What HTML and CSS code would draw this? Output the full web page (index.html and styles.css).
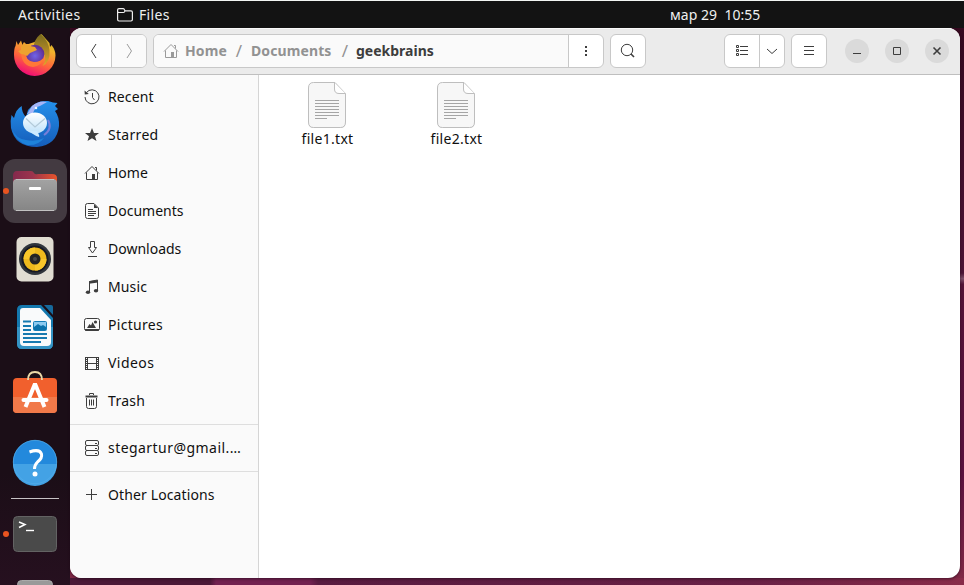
FILE: index.html
```html
<!DOCTYPE html>
<html lang="en">
<head>
<meta charset="utf-8">
<title>Files</title>
<link rel="stylesheet" href="styles.css">
</head>
<body>
<header class="topbar">
  <span class="activities">Activities</span>
  <span class="app"><svg width="16" height="14" viewBox="0 0 16 14" fill="none" stroke="#eee" stroke-width="1.2"><path d="M.6 3.500V2Q.6.6 2 .6h4.200q1 0 1.300 1.200.3 1 1.300 1H14q1.400 0 1.400 1.400v7.400q0 1.400-1.400 1.400H2Q.6 13 .6 11.600V3.500q0 1 1.400 1h4.500q1 0 1.500-1.700"/></svg><span class="applabel">Files</span></span>
  <span class="clock">мар 29&nbsp; 10:55</span>
</header>
<div class="desktop">
  <nav class="dock">
    <div class="launcher"><svg width="64" height="64" viewBox="0 0 64 64">
      <defs>
        <linearGradient id="fox" x1=".75" y1="0" x2=".35" y2="1"><stop offset="0" stop-color="#b7a724"/><stop offset=".3" stop-color="#f3b52c"/><stop offset=".65" stop-color="#ff643c"/><stop offset="1" stop-color="#ef0878"/></linearGradient>
        <linearGradient id="flame" x1="0" y1="0" x2="0" y2="1"><stop offset="0" stop-color="#77691f"/><stop offset="1" stop-color="#e2a52c"/></linearGradient>
        <radialGradient id="orb" cx=".5" cy=".6"><stop offset="0" stop-color="#7064e8"/><stop offset="1" stop-color="#603096"/></radialGradient>
        <linearGradient id="bird" x1="0" y1="0" x2="0" y2="1"><stop offset="0" stop-color="#2490ea"/><stop offset="1" stop-color="#155dba"/></linearGradient>
        <linearGradient id="mail" x1="0" y1="0" x2="0" y2="1"><stop offset="0" stop-color="#fff"/><stop offset="1" stop-color="#bfe2fa"/></linearGradient>
        <linearGradient id="steel" x1="0" y1="0" x2="0" y2="1"><stop offset="0" stop-color="#a3a3a3"/><stop offset="1" stop-color="#858585"/></linearGradient>
        <linearGradient id="flap"><stop offset="0" stop-color="#84294d"/><stop offset=".45" stop-color="#9c344d"/><stop offset="1" stop-color="#e8542b"/></linearGradient>
      </defs>
      <path d="M13.500 18l1.500 4 3-4.500 1.500 4.500q3-1.500 6-1l6-2 4-4 3-4 4 4.500 4 4.500.5 4 1.500-2q4 5 4 10.500A20.700 20.700 0 0 1 11 32q0-7 1.500-9z" fill="url(#fox)"/>
      <path d="M37.500 11q-6 5-7 13 8 2 11 8 2 6-2 11 8-4 7-16-1-9-9-16z" fill="url(#flame)"/>
      <circle cx="32" cy="31" r="9.300" fill="url(#orb)"/>
      <path d="M23 29q-1 9 8 10 7 0 10-5-2 9-11 10-11-1-12-14z" fill="#ff7837"/>
      <path d="M18 24l3-5q3 4 11 5l2 3-7 3-3 3q-3-2-6-2l-3-3 3-1z" fill="#eda22f"/>
    </svg></div>
    <div class="launcher"><svg width="64" height="64" viewBox="0 0 64 64">
      <path d="M8.500 24l2.500 3q2-9 7.700-12 0 7 4.300 11l2-7q8-10 20-9l5 1.500 4.500.5-2.500 3 3 3-3 2q4.500 6 4 15-2 19-22 21Q12 56 8 37q-1-7 .5-13z" fill="url(#bird)"/>
      <path d="M24 23l5-8q7-6 15-4l-7 4q-5 1-7 7z" fill="#a5b5f7"/>
      <path d="M9 38q4 10 14 11 10 2 18-2-6 8-17 7Q12 50 9 38z" fill="#1e82da"/>
      <path d="M45 29q5 9-4 15" fill="none" stroke="#777fd8" stroke-width="2"/>
      <ellipse cx="32" cy="32" rx="12" ry="10.500" fill="url(#mail)"/>
      <path d="M27 40q3 4 9 6 1-1-2-6z" fill="#cdeaff"/>
      <path d="M23 27.500l9 8.500 10-8.500" fill="none" stroke="#b3cad9" stroke-width="1.200"/><circle cx="33" cy="17" r="1.300" fill="#eaf7ff"/>
    </svg></div>
    <div class="launcher active running"><svg width="64" height="64" viewBox="0 0 64 64">
      <path d="M10 17q0-5 4-5h14q2 0 3 2t4 1h14q5 0 5 4v12H10z" fill="url(#flap)"/>
      <rect x="10" y="20" width="44" height="32" rx="4" fill="url(#steel)"/><path d="M13 20.500h38M13 51.500h38" stroke="#c2c2c2"/>
      <rect x="26" y="28" width="12" height="3" rx="1" fill="#fff"/>
    </svg></div>
    <div class="launcher"><svg width="64" height="64" viewBox="0 0 64 64">
      <rect x="13.500" y="10" width="37" height="44.500" rx="5" fill="#e1ddd2"/>
      <circle cx="32" cy="32" r="16" fill="#30353b"/><circle cx="32" cy="32" r="13.500" fill="#171923"/><circle cx="32" cy="32" r="11.500" fill="#eeb91d"/><path d="M20.500 32a11.500 11.500 0 0 1 11.500-11.500L32 32zM32 43.500A11.500 11.500 0 0 0 43.500 32H32z" fill="#f8c62a"/>
      <circle cx="32" cy="32" r="5.500" fill="#242424"/><circle cx="32" cy="32" r="2" fill="#484848"/>
    </svg></div>
    <div class="launcher"><svg width="64" height="64" viewBox="0 0 64 64">
      <path d="M19 10h19l12 13v26q0 5-5 5H19q-5 0-5-5V15q0-5 5-5z" fill="#1478ae"/><path d="M14 32h36v17q0 5-5 5H19q-5 0-5-5z" fill="#3493c4"/>
      <path d="M20 13h17l11 12v22q0 4-4 4H21q-4 0-4-4V16q0-3 3-3z" fill="#f9fafb"/>
      <path d="M41 10h7q2 0 2 2v8z" fill="#16699c"/>
      <path d="M20 26.500h8M20 31h8M20 35h8M20 39h24M20 43h24M20 47h18" stroke="#187ab0" stroke-width="2"/>
      <rect x="30.500" y="26.500" width="13" height="9" rx="1" fill="#8ccaf0" stroke="#147db6"/><path d="M31 35v-3l4-3 3 2 2-1 3 2v3z" fill="#0b72ab"/>
    </svg></div>
    <div class="launcher raised"><svg width="64" height="64" viewBox="0 0 64 64">
      <path d="M10 22q0-4 4-4h36q4 0 4 4v27q0 4-4 4H14q-4 0-4-4z" fill="#f1602d"/><path d="M10 37h44v12q0 4-4 4H14q-4 0-4-4z" fill="#f17949"/>
      <path d="M25 20q0-8 7-8t7 8" fill="none" stroke="#ecd9a8" stroke-width="1.800"/>
      <path d="M22.500 47l9-22h1l9 22" fill="none" stroke="#fff" stroke-width="4"/><path d="M20.500 40h23" stroke="#fff" stroke-width="4" stroke-linecap="round"/>
    </svg></div>
    <div class="launcher help"><svg width="64" height="64" viewBox="0 0 64 64">
      <circle cx="32" cy="32" r="22" fill="#2389dc"/><path d="M10 34h44a22 22 0 0 1-44 0z" fill="#43a2e5"/><circle cx="32" cy="32" r="21.700" fill="none" stroke="#55aee9" stroke-width=".7"/>
      <path d="M26.500 22q10-3.500 12 2 1 4-4 8-3 3-3 7" fill="none" stroke="#fff" stroke-width="3"/><circle cx="32" cy="44" r="2.500" fill="#fff"/>
    </svg></div>
    <hr class="dockline">
    <div class="launcher running"><svg width="64" height="64" viewBox="0 0 64 64">
      <rect x="10.500" y="14.500" width="43" height="35" rx="4" fill="#4a4a4a" stroke="#636363"/>
      <path d="M16 20l6 2.500-6 3" fill="none" stroke="#fff" stroke-width="1.500"/><path d="M23 28.500h8" stroke="#fff" stroke-width="1.400"/>
    </svg></div>
    <div class="launcher partial"><svg width="64" height="15" viewBox="0 0 64 15"><rect x="14.500" y="10.500" width="35" height="44" rx="4" fill="#999" stroke="#aaa"/></svg></div>
  </nav>

  <main class="window">
    <div class="header">
      <div class="group nav">
        <div class="cell"><svg width="16" height="16" viewBox="0 0 16 16"><path d="M10 1L5.500 8l4.500 7" class="line"/></svg></div>
        <div class="cell pale"><svg width="16" height="16" viewBox="0 0 16 16"><path d="M6 1l4.500 7L6 15" class="line faint"/></svg></div>
      </div>
      <div class="group path">
        <div class="crumbs">
          <svg class="faint" width="16" height="16" viewBox="0 0 16 16"><use href="#home"/></svg>
          <span class="crumb c-home">Home</span><span class="slash">/</span><span class="crumb c-docs">Documents</span><span class="slash">/</span><span class="crumb current">geekbrains</span>
        </div>
        <div class="cell"><svg width="16" height="16" viewBox="0 0 16 16" fill="#3d3d3d"><path d="M7 3h2v2H7zm0 4h2v2H7zm0 4h2v2H7z"/></svg></div>
      </div>
      <div class="group single"><div class="cell"><svg width="16" height="16" viewBox="0 0 16 16"><circle cx="7" cy="7" r="5.700" class="line"/><path d="M11 11l3 3" class="line thick"/></svg></div></div>
      <div class="spacer"></div>
      <div class="group view">
        <div class="cell"><svg width="16" height="16" viewBox="0 0 16 16"><path d="M2.500 2.500h2v2h-2zm0 4h2v2h-2zm0 4h2v2h-2zM6 3.500h8M6 7.500h8M6 11.500h8" class="line"/></svg></div>
        <div class="cell slim"><svg width="16" height="16" viewBox="0 0 16 16"><path d="M3 6l5 4.500L13 6" class="line"/></svg></div>
      </div>
      <div class="group single"><div class="cell"><svg width="16" height="16" viewBox="0 0 16 16"><path d="M3 3.500h10M3 7.500h10M3 11.500h10" class="line"/></svg></div></div>
      <div class="controls">
        <div class="control"><svg width="16" height="16" viewBox="0 0 16 16"><path d="M4 10.500h8" class="line"/></svg></div>
        <div class="control"><svg width="16" height="16" viewBox="0 0 16 16"><path d="M4.500 4.500h7v7h-7z" class="line"/></svg></div>
        <div class="control"><svg width="16" height="16" viewBox="0 0 16 16"><path d="M4.500 4.500l7 7m0-7l-7 7" class="line thick"/></svg></div>
      </div>
    </div>
    <div class="body">
      <aside class="sidebar">
        <div class="place"><svg width="16" height="16" viewBox="0 0 16 16"><path d="M2.500 3.500A7 7 0 1 1 1 8M8.500 4v4.500l2 2.500" class="line"/><path d="M.5 1.500l.3 4 4-.4z" fill="#3d3d3d"/></svg><span class="loose">Recent</span></div>
        <div class="place"><svg width="16" height="16" viewBox="0 0 16 16"><path d="M8 1l2 5h5l-4 3.300 1.500 4.700L8 11.200 3.500 14 5 9.300 1 6h5z" fill="#3d3d3d"/></svg><span class="looser">Starred</span></div>
        <div class="place"><svg width="16" height="16" viewBox="0 0 16 16"><g id="home"><path d="M1 8.500l7-7 7 7M2.500 7.500v7h11v-7M11 2.500h1.500v3" class="line"/><path d="M8 9h3v5.500H8z" class="solid"/></g></svg><span>Home</span></div>
        <div class="place"><svg width="16" height="16" viewBox="0 0 16 16"><path d="M3.500.5H10L14.500 5v8.500q0 2-2 2h-9q-2 0-2-2v-11q0-2 2-2zM4 6.500h5M4 8.500h8M4 10.500h8M4 12.500h6" class="line"/><path d="M10 1v4h4z" class="solid"/></svg><span>Documents</span></div>
        <div class="place"><svg width="16" height="16" viewBox="0 0 16 16"><path d="M6.500.5h4v6h2l-4 5.500-4-5.500h2zM4 15.500h9" class="line"/></svg><span>Downloads</span></div>
        <div class="place"><svg width="16" height="16" viewBox="0 0 16 16"><path d="M5.500 13V2.500L13.500 1v10.500" class="line"/><path d="M5 2.200L14 1v2.500L5 4.700z" class="solid"/><ellipse cx="4" cy="13.200" rx="2.200" ry="1.700" class="solid"/><ellipse cx="12" cy="11.700" rx="2.200" ry="1.700" class="solid"/></svg><span class="loose">Music</span></div>
        <div class="place"><svg width="16" height="16" viewBox="0 0 16 16"><rect x=".5" y="1.500" width="15" height="12" rx="2" class="line"/><path d="M1 12h14v1.500l-1.500.5h-11L1 13.500zM3 11l2.500-4 1.500 1.500L8.500 5l3.500 6z" class="solid"/><circle cx="11.500" cy="5" r="1.600" class="solid"/></svg><span class="looser">Pictures</span></div>
        <div class="place"><svg width="16" height="16" viewBox="0 0 16 16"><path d="M3.500 2v13M12.500 2v13M3.500 2.500h9M3.500 8.500h9M3.500 14.500h9" class="line"/><path d="M1.500 2v13M14.500 2v13" class="line"/><path d="M2.500 2v13M13.500 2v13" class="line dotted"/></svg><span class="loosest">Videos</span></div>
        <div class="place"><svg width="16" height="16" viewBox="0 0 16 16"><path d="M2.500 5v8.500q0 2 2 2h6q2 0 2-2V5M5.500 6.500v6M7.500 6.500v6M9.500 6.500v6M5.500 2V.5h4V2" class="line"/><path d="M1.500 3.500h12" class="line heavy"/></svg><span class="looser">Trash</span></div>
        <hr>
        <div class="place"><svg width="16" height="16" viewBox="0 0 16 16"><path d="M3 .5h10q1.500 0 1.500 1.500v2q0 1.500-1.500 1.500H3Q1.500 5.500 1.500 4V2Q1.500.5 3 .5zM3 5.500h10q1.500 0 1.500 1.500v2q0 1.500-1.500 1.500H3Q1.500 10.500 1.500 9V7Q1.500 5.500 3 5.500zM3 10.500h10q1.500 0 1.500 1.500v2q0 1.500-1.500 1.500H3q-1.500 0-1.500-1.500v-2q0-1.500 1.500-1.500zM11 3.500h2M11 8.500h2M11 13.500h2" class="line"/></svg><span class="loosest">stegartur@gmail.…</span></div>
        <hr>
        <div class="place"><svg width="16" height="16" viewBox="0 0 16 16"><path d="M2 7.500h11M7.500 2v11" class="line"/></svg><span class="loose">Other Locations</span></div>
      </aside>
      <section class="files">
        <div class="file"><svg width="40" height="48" viewBox="0 0 40 48"><g id="textfile"><path d="M6 1.500h21L38.500 12v29q0 5-5 5H6.500q-5 0-5-5V6.500q0-5 4.500-5z" fill="#dcdcdc"/><path d="M6.500.5H28L38.500 11.500V40q0 5.500-5 5.500h-27q-5 0-5-5.500V6q0-5.500 5-5.500z" fill="#f7f7f7" stroke="#bebebe"/><path d="M27.500 1v6q0 4.500 4.500 4.500h6.500" fill="#fff" stroke="#bebebe"/><path d="M8 18.500h24M8 21.500h24M8 24.500h24M8 27.500h24M8 30.500h24M8 33.500h24M8 36.500h12" stroke="#a5a5a5"/></g></svg><span>file1.txt</span></div>
        <div class="file"><svg width="40" height="48" viewBox="0 0 40 48"><use href="#textfile"/></svg><span>file2.txt</span></div>
      </section>
    </div>
  </main>
</div>
</body>
</html>
```

FILE: styles.css
```css
* { box-sizing: border-box; }
body {
  margin: 0; width: 964px; height: 585px; overflow: hidden;
  display: flex; flex-direction: column;
  font: 14px/20px "Noto Sans", "Open Sans", sans-serif; color: #101010;
}
svg { display: block; flex: none; overflow: hidden; }
.topbar {
  height: 28px; flex: none; border-top: 1px solid #f2f5f3; background: #131313; color: #efefef;
  display: grid; grid-template-columns: 99px 553px 1fr; padding-left: 18px; align-items: center;
}
.activities { letter-spacing: .42px; }
.app { display: flex; gap: 6px; align-items: center; }
.applabel { letter-spacing: .35px; }
.clock { letter-spacing: .05px; }
.desktop {
  height: 557px; flex: none; display: flex; align-items: flex-start; overflow: hidden;
  background:
    linear-gradient(90deg, #4b1837 0 140px, #722150 146px 240px, #581b40 248px, #692045 680px, #892b49) 70px 550px / 894px 7px no-repeat,
    linear-gradient(#35091f, #4d1436 44%, #80506b 45%, #541337 46%, #5a123f 80%, #832a47);
}
.dock {
  width: 70px; height: 557px; flex: none; overflow: hidden;
  display: flex; flex-direction: column; gap: 4px; padding: 0 3px;
  background: linear-gradient(#1b0e17, #1b0e17 80%, #26101f);
}
.launcher { width: 64px; height: 64px; flex: none; border-radius: 12px; position: relative; }
.launcher:first-child { margin-top: -5px; }
.partial { height: 15px; }
.raised { padding: 0; margin-top: -3px; margin-bottom: 3px; }
.help { margin-top: -1px; margin-bottom: 1px; }
.active { background: #433a41; }
.running::before {
  content: ""; position: absolute; left: 0; top: 29px; width: 6px; height: 6px;
  border-radius: 50%; background: #e95420;
}
.dockline { width: 48px; height: 1px; margin: -1px 0 -1px 8px; border: 0; background: #c7c3c5; flex: none; }
.window {
  width: 890px; height: 550px; background: #fff; border-radius: 12px; overflow: hidden;
  display: flex; flex-direction: column; box-shadow: 0 1px 3px #1b071699;
}
.header {
  height: 47px; flex: none; display: flex; align-items: center; gap: 6px; padding: 0 11px 1px 6px;
  background: #ebebeb; border-top: 1px solid #fafafa; border-bottom: 1px solid #bfbfbf;
}
.group {
  height: 34px; display: flex; border: 1px solid #c8c8c8; border-radius: 6px;
  background: #fff; overflow: hidden; flex: none;
}
.cell { flex: 1; display: flex; align-items: center; justify-content: center; }
.cell + .cell, .crumbs + .cell { border-left: 1px solid #c8c8c8; }
.pale { background: #fafafa; }
.nav { width: 71px; }
.path { width: 451px; }
.path .cell { flex: 0 0 35px; }
.single { width: 36px; }
.view { width: 61px; }
.view .slim { flex: 0 0 25px; }
.spacer { flex: 1; }
.crumbs {
  flex: 1; display: flex; align-items: center; padding-left: 9px; background: #fafafa;
  font-weight: 700; color: #929292;
}
.crumb { letter-spacing: .1px; }
.c-home { width: 42px; margin-left: 6px; }
.c-docs { width: 82px; }
.current { color: #3d3d3d; letter-spacing: 0; margin-left: -1px; }
.slash { width: 24px; text-align: center; font-weight: 400; font-size: 17px; }
.controls { display: flex; gap: 16px; margin-left: 12px; }
.control {
  width: 24px; height: 24px; border-radius: 50%; background: #dadada;
  display: flex; align-items: center; justify-content: center;
}
.line { fill: none; stroke: #3d3d3d; stroke-width: 1; }
.thick { stroke-width: 1.6; }
.heavy { stroke-width: 2; }
.dotted { stroke-dasharray: 1 1; }
.solid { fill: #3d3d3d; }
.faint { opacity: .5; }
.body { flex: 1; display: flex; min-height: 0; }
.sidebar { width: 189px; flex: none; background: #fafafa; border-right: 1px solid #d5d5d5; padding-top: 3px; }
.place { height: 38px; display: flex; align-items: center; gap: 8px; padding-left: 14px; white-space: nowrap; }
.loose { letter-spacing: .12px; }
.looser { letter-spacing: .3px; }
.loosest { letter-spacing: .45px; }
.sidebar hr { height: 1px; margin: 4px 0; border: 0; background: #dedede; }
.files { display: flex; padding: 7px 0 0 4px; }
.file { width: 129px; display: flex; flex-direction: column; align-items: center; line-height: 18px; letter-spacing: .3px; }
.file svg { margin-left: -1px; }
```
